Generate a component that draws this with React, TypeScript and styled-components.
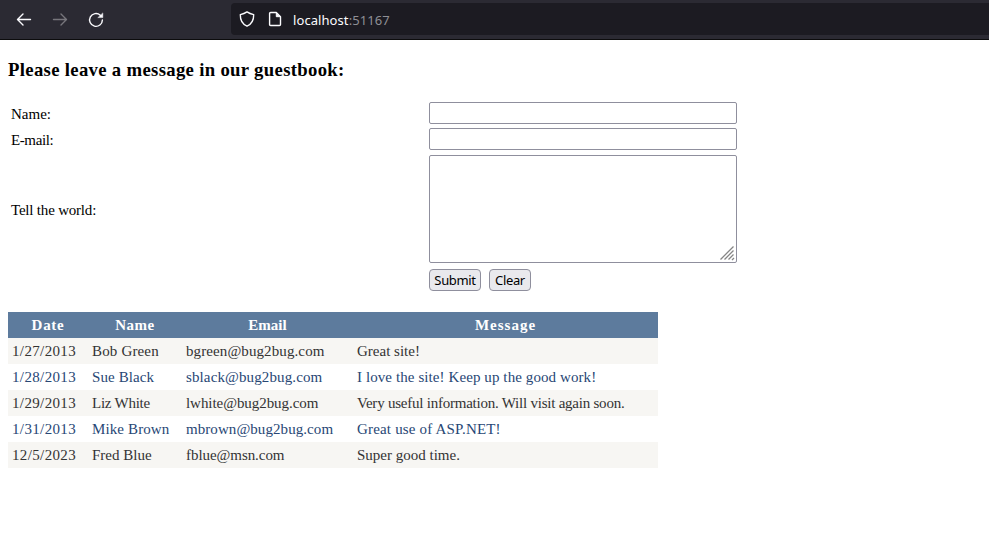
import React from "react";
import styled, { createGlobalStyle } from "styled-components";

const Global = createGlobalStyle`
  *, *::before, *::after { box-sizing: border-box; }
  html, body { margin: 0; background: #fff; overflow: hidden; }
  body { font-family: "Liberation Serif", "Times New Roman", serif; font-size: 15px; color: #000; }
`;

const Toolbar = styled.header`
  display: flex;
  align-items: flex-start;
  height: 40px;
  background: #2b2a33;
  border-bottom: 1px solid #0c0c0d;
`;

const NavButtons = styled.nav`
  display: flex;
  gap: 20px;
  width: 231px;
  padding: 12px 0 0 16px;
`;

const IconButton = styled.button<{ $dim?: boolean }>`
  width: 16px;
  height: 16px;
  padding: 0;
  border: 0;
  background: none;
  color: ${(p) => (p.$dim ? "#77767c" : "#fbfbfe")};
  svg { display: block; }
`;

const AddressBar = styled.div`
  display: flex;
  flex: 1;
  align-items: center;
  height: 32px;
  margin-top: 3px;
  padding-left: 8px;
  border-radius: 4px 0 0 4px;
  background: #1c1b22;
  color: #fbfbfe;
  svg { display: block; margin-right: 12px; }
`;

const Address = styled.span`
  margin-left: -2px;
  padding-top: 2px;
  font: 13px/18px "Noto Sans", sans-serif;
  letter-spacing: 0.08px;
`;

const Port = styled.span`
  color: #8f8f95;
`;

const Page = styled.main`
  padding: 19px 8px 0;
`;

const Title = styled.h3`
  height: 22px;
  margin: 0;
  font-size: 18.72px;
  line-height: 22px;
  letter-spacing: 0.32px;
`;

const Form = styled.form`
  display: grid;
  grid-template-columns: 418px 308px;
  grid-template-rows: 22px 22px 110px 22px;
  row-gap: 4px;
  align-items: center;
  margin-top: 21px;
  padding-left: 3px;
`;

const Label = styled.label<{ $spacing?: number }>`
  line-height: 22px;
  padding-top: 2px;
  letter-spacing: ${(p) => p.$spacing ?? 0}px;
`;

const TextInput = styled.input`
  width: 308px;
  height: 22px;
  border: 1px solid #8f8f9d;
  border-radius: 2px;
  outline: none;
`;

const MessageBox = styled.div`
  position: relative;
  width: 308px;
  height: 108px;
`;

const MessageInput = styled.textarea`
  display: block;
  width: 100%;
  height: 100%;
  border: 1px solid #8f8f9d;
  border-radius: 2px;
  outline: none;
  resize: none;
`;

const ResizeGrip = styled.svg`
  position: absolute;
  right: 2px;
  bottom: 2px;
`;

const Actions = styled.div`
  display: flex;
  gap: 8px;
  grid-column: 2;
  padding-top: 1px;
  height: 23px;
  align-self: start;
`;

const FormButton = styled.button<{ $width: number }>`
  width: ${(p) => p.$width}px;
  height: 22px;
  padding: 0;
  border: 1px solid #8f8f9d;
  border-radius: 4px;
  background: #e9e9ed;
  color: #000;
  font: 13px/20px "Noto Sans", sans-serif;
  letter-spacing: -0.35px;
`;

const Entries = styled.table`
  width: 650px;
  margin-top: 22px;
  border-collapse: collapse;
  table-layout: fixed;
  color: #333;
`;

const HeadRow = styled.tr`
  height: 26px;
  background: #5d7b9d;
  color: #fff;
`;

const EntryRow = styled.tr<{ $alt: boolean }>`
  height: 26px;
  background: ${(p) => (p.$alt ? "#fff" : "#f7f6f3")};
  color: ${(p) => (p.$alt ? "#284775" : "#333")};
`;

const HeadCell = styled.th<{ $width: number; $spacing: number }>`
  width: ${(p) => p.$width}px;
  padding: 0 4px;
  line-height: 26px;
  letter-spacing: ${(p) => p.$spacing}px;
`;

const Cell = styled.td<{ $spacing: number }>`
  padding: 0 4px;
  line-height: 26px;
  white-space: nowrap;
  letter-spacing: ${(p) => p.$spacing}px;
`;

const columns = [
  { name: "Date", width: 80, spacing: 0.7 },
  { name: "Name", width: 94, spacing: 0.5 },
  { name: "Email", width: 171, spacing: 0.05 },
  { name: "Message", width: 305, spacing: 1 },
];

type Entry = { text: string; spacing: number }[];

const entries: Entry[] = [
  [
    { text: "1/27/2013", spacing: 0.36 },
    { text: "Bob Green", spacing: 0.16 },
    { text: "bgreen@bug2bug.com", spacing: 0.1 },
    { text: "Great site!", spacing: 0 },
  ],
  [
    { text: "1/28/2013", spacing: 0.36 },
    { text: "Sue Black", spacing: 0.1 },
    { text: "sblack@bug2bug.com", spacing: 0.12 },
    { text: "I love the site! Keep up the good work!", spacing: 0.09 },
  ],
  [
    { text: "1/29/2013", spacing: 0.36 },
    { text: "Liz White", spacing: -0.24 },
    { text: "lwhite@bug2bug.com", spacing: -0.06 },
    { text: "Very useful information. Will visit again soon.", spacing: -0.23 },
  ],
  [
    { text: "1/31/2013", spacing: 0.36 },
    { text: "Mike Brown", spacing: 0.12 },
    { text: "mbrown@bug2bug.com", spacing: 0.07 },
    { text: "Great use of ASP.NET!", spacing: 0.18 },
  ],
  [
    { text: "12/5/2023", spacing: 0.36 },
    { text: "Fred Blue", spacing: 0 },
    { text: "fblue@msn.com", spacing: -0.06 },
    { text: "Super good time.", spacing: 0 },
  ],
];

const stroke = { fill: "none", stroke: "currentColor", strokeWidth: 1.4, strokeLinecap: "round", strokeLinejoin: "round" } as const;

export default function App() {
  return (
    <>
      <Global />
      <Toolbar>
        <NavButtons>
          <IconButton aria-label="Back">
            <svg width="16" height="16" viewBox="0 0 16 16" {...stroke}><path d="M14.5 7.5H1.7M7 2.1L1.5 7.5L7 12.9" /></svg>
          </IconButton>
          <IconButton aria-label="Forward" $dim>
            <svg width="16" height="16" viewBox="0 0 16 16" {...stroke}><path d="M1.5 7.5H14.3M9 2.1L14.5 7.5L9 12.9" /></svg>
          </IconButton>
          <IconButton aria-label="Reload">
            <svg width="16" height="16" viewBox="0 0 16 16" {...stroke}>
              <path d="M12.3 3.2A6.4 6.4 0 1 0 14.4 8" />
              <path d="M14.8 1.3V5.6H10.2Z" fill="currentColor" strokeWidth="0.5" />
            </svg>
          </IconButton>
        </NavButtons>
        <AddressBar>
          <svg width="16" height="16" viewBox="0 0 16 16" {...stroke}><path d="M8 0.9Q10.8 2.8 14.7 3.6C14.8 8.9 12.4 13.4 8 15.2C3.6 13.4 1.2 8.9 1.3 3.6Q5.2 2.8 8 0.9Z" /></svg>
          <svg width="16" height="16" viewBox="0 0 16 16" {...stroke}><path d="M3.7 1.5H9.3L13.5 5.7V13.4Q13.5 14.5 12.4 14.5H3.7Q2.6 14.5 2.6 13.4V2.6Q2.6 1.5 3.7 1.5Z" /><path d="M9.3 1.9V5.7H13.1Z" fill="currentColor" strokeWidth="1" /></svg>
          <Address>localhost<Port>:51167</Port></Address>
        </AddressBar>
      </Toolbar>
      <Page>
        <Title>Please leave a message in our guestbook:</Title>
        <Form>
          <Label htmlFor="name">Name:</Label>
          <TextInput id="name" />
          <Label htmlFor="email" $spacing={-0.4}>E-mail:</Label>
          <TextInput id="email" />
          <Label htmlFor="message" $spacing={-0.2}>Tell the world:</Label>
          <MessageBox>
            <MessageInput id="message" />
            <ResizeGrip width="16" height="16" viewBox="0 0 16 16" fill="none" stroke="#858585" strokeWidth="1.3">
              <path d="M1.5 14.5L14.5 1.5M5.5 14.5L14.5 5.5M9.5 14.5L14.5 9.5M13 15L15 13" />
            </ResizeGrip>
          </MessageBox>
          <Actions>
            <FormButton type="button" $width={52}>Submit</FormButton>
            <FormButton type="button" $width={42}>Clear</FormButton>
          </Actions>
        </Form>
        <Entries>
          <thead>
            <HeadRow>
              {columns.map((c) => <HeadCell key={c.name} $width={c.width} $spacing={c.spacing}>{c.name}</HeadCell>)}
            </HeadRow>
          </thead>
          <tbody>
            {entries.map((row, i) => (
              <EntryRow key={row[0].text} $alt={i % 2 === 1}>
                {row.map((cell) => <Cell key={cell.text} $spacing={cell.spacing}>{cell.text}</Cell>)}
              </EntryRow>
            ))}
          </tbody>
        </Entries>
      </Page>
    </>
  );
}
